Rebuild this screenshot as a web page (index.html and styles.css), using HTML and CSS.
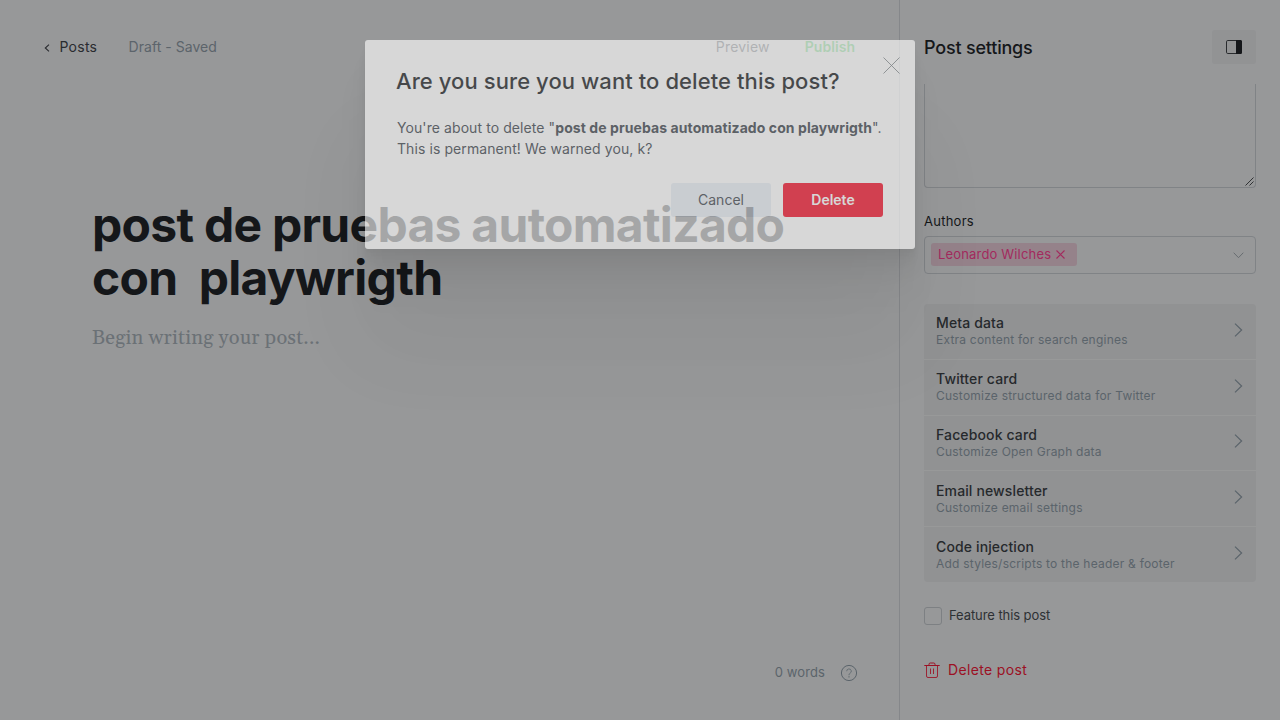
FILE: index.html
```html
<!DOCTYPE html>
<html lang="en">
<head>
<meta charset="utf-8">
<title>Post editor</title>
<link rel="stylesheet" href="styles.css">
</head>
<body>
<div class="app">
  <main class="editor">
    <header class="topbar">
      <a class="back"><svg width="6" height="8" viewBox="0 0 6 8"><path d="M5 .7 1.3 4 5 7.3" fill="none" stroke="currentColor" stroke-width="1.1"/></svg><span>Posts</span></a>
      <span class="status">Draft - Saved</span>
      <span class="preview">Preview</span>
      <span class="publish">Publish</span>
    </header>
    <section class="canvas">
      <h1 class="post-title">post de pruebas automatizado<br>con&nbsp; playwrigth</h1>
      <p class="placeholder">Begin writing your post...</p>
    </section>
    <footer class="wordcount">
      <span>0 words</span>
      <svg width="18" height="18" viewBox="0 0 18 18" fill="none" stroke="currentColor"><circle cx="9" cy="9" r="7.6"/><path d="M6.7 7.2a2.3 2.3 0 1 1 3.3 2.1c-.7.4-1 .8-1 1.6v.3" stroke-width=".8"/><circle cx="9" cy="12.9" r=".3" stroke-width=".8"/></svg>
    </footer>
  </main>
  <aside class="settings">
    <header class="settings-head">
      <h2>Post settings</h2>
      <button class="toggle"><svg width="16" height="14" viewBox="0 0 16 14"><rect x=".5" y=".5" width="15" height="13" rx="1.3" fill="none" stroke="#292b2e"/><path d="M10 0h4.500A1.500 1.500 0 0 1 16 1.500v11a1.500 1.500 0 0 1-1.500 1.500H10z" fill="#15171a"/></svg></button>
    </header>
    <div class="excerpt"><svg width="9" height="9" viewBox="0 0 9 9"><path d="M.5 8.500l8-8M4.500 8.500l4-4" stroke="#303234" fill="none"/></svg></div>
    <label class="label">Authors</label>
    <div class="select">
      <span class="token"><span>Leonardo Wilches</span><svg width="9" height="9" viewBox="0 0 9 9"><path d="M.5.5l8 8M8.500.5l-8 8" stroke="currentColor" stroke-width="1.1"/></svg></span>
      <svg class="caret" width="11" height="7" viewBox="0 0 11 7"><path d="M.7.7l4.800 5 4.800-5" fill="none" stroke="currentColor"/></svg>
    </div>
    <ul class="menu">
      <li><div><b>Meta data</b><span>Extra content for search engines</span></div><svg width="9" height="14" viewBox="0 0 9 14"><path d="M1 .6l6.600 6.400L1 13.400"/></svg></li>
      <li><div><b>Twitter card</b><span>Customize structured data for Twitter</span></div><svg width="9" height="14" viewBox="0 0 9 14"><path d="M1 .6l6.600 6.400L1 13.400"/></svg></li>
      <li><div><b>Facebook card</b><span>Customize Open Graph data</span></div><svg width="9" height="14" viewBox="0 0 9 14"><path d="M1 .6l6.600 6.400L1 13.400"/></svg></li>
      <li><div><b>Email newsletter</b><span>Customize email settings</span></div><svg width="9" height="14" viewBox="0 0 9 14"><path d="M1 .6l6.600 6.400L1 13.400"/></svg></li>
      <li><div><b>Code injection</b><span>Add styles/scripts to the header &amp; footer</span></div><svg width="9" height="14" viewBox="0 0 9 14"><path d="M1 .6l6.600 6.400L1 13.400"/></svg></li>
    </ul>
    <div class="feature"><i class="box"></i><span>Feature this post</span></div>
    <div class="remove"><svg width="16" height="16" viewBox="0 0 16 16" fill="none" stroke="currentColor"><path d="M.3 3.500h15.400M5 3.500V2.300a1.300 1.300 0 0 1 1.300-1.300h3.400A1.300 1.300 0 0 1 11 2.300v1.200"/><path d="M2.500 3.500v10.500a1.500 1.500 0 0 0 1.500 1.500h8a1.500 1.500 0 0 0 1.500-1.500V3.500M6.500 6.500v5.500M9.500 6.500v5.500" stroke-width=".85"/></svg><span>Delete post</span></div>
  </aside>
</div>
<div class="modal">
  <svg class="close" width="17" height="17" viewBox="0 0 17 17"><path d="M.5.5l16 16M16.500.5l-16 16" stroke="#6d7378" stroke-width=".8"/></svg>
  <h3>Are you sure you want to delete this post?</h3>
  <p>You're about to delete "<strong>post de pruebas automatizado con playwrigth</strong>".<br>This is permanent! We warned you, k?</p>
  <div class="actions"><button class="btn cancel">Cancel</button><button class="btn delete">Delete</button></div>
</div>
</body>
</html>
```
FILE: styles.css
```css
* { box-sizing: border-box; }
body { margin: 0; background: #979899; font-family: Inter, "Liberation Sans", sans-serif; overflow: hidden; }
h1, h2, h3, p, ul { margin: 0; padding: 0; }
svg { display: block; flex: none; }
button { border: 0; font-family: inherit; padding: 0; }
.app { display: flex; width: 1280px; height: 720px; }
.editor { flex: 1; display: flex; flex-direction: column; }
.topbar { display: flex; align-items: center; height: 34px; margin-top: 30px; padding: 0 44px 2px 44px; font-size: 14px; letter-spacing: .2px; color: #292b2f; }
.back { display: flex; align-items: center; gap: 9.5px; width: 84.5px; letter-spacing: .25px; }
.back svg { margin-top: 3px; }
.status { color: #5c646b; flex: 1; letter-spacing: .05px; }
.preview { color: #30343a; margin-right: 35px; }
.publish { color: #30803c; font-weight: 600; letter-spacing: .05px; }
.canvas { flex: 1; padding: 134px 0 0 92px; }
.post-title { font-size: 48px; line-height: 53px; font-weight: 700; letter-spacing: -.72px; color: #15171a; white-space: nowrap; }
.placeholder { margin-top: 18px; font: 20px/32px Georgia, Gelasio, "Liberation Serif", serif; letter-spacing: .2px; color: #6b7176; }
.wordcount { display: flex; justify-content: flex-end; align-items: center; gap: 15px; height: 34px; padding-right: 41px; margin-bottom: 30px; font-size: 13px; letter-spacing: .1px; color: #5b646b; }
.wordcount span, .token span, .feature span, .remove span { padding-bottom: 2px; }
.settings { width: 381px; border-left: 1px solid #85878a; padding: 30px 24px 0; }
.settings-head { display: flex; justify-content: space-between; align-items: center; height: 34px; }
.settings-head h2 { font-size: 18px; font-weight: 500; letter-spacing: -.2px; color: #15171a; }
.toggle { width: 44px; height: 34px; border-radius: 3px; background: #929394; display: flex; align-items: center; justify-content: center; }
.excerpt { height: 104px; margin-top: 20px; border: 1px solid #808386; border-top: 0; border-radius: 0 0 4px 4px; display: flex; justify-content: flex-end; align-items: flex-end; padding: 1px; }
.label { display: block; margin-top: 23px; font-size: 13px; line-height: 20px; letter-spacing: .25px; color: #15171a; }
.select { display: flex; align-items: center; justify-content: space-between; height: 38px; margin-top: 5px; padding: 0 11px 0 6px; border: 1px solid #808386; border-radius: 4px; color: #686d71; }
.token { display: flex; align-items: center; gap: 5px; height: 23px; margin-bottom: 1px; padding: 0 12px 0 7px; border-radius: 3px; background: #95828a; color: #a32a5e; font-size: 13px; letter-spacing: .17px; }
.menu { list-style: none; margin-top: 30px; border-radius: 4px; background: #919293; }
.menu li { display: flex; justify-content: space-between; align-items: center; height: 55.75px; padding: 0 13px 0 12px; border-bottom: 1px solid #989999; }
.menu li:last-child { border-bottom: 0; height: 55px; }
.menu b { display: block; font-size: 14px; line-height: 18px; font-weight: 500; letter-spacing: .13px; color: #26292c; }
.menu span { display: block; font-size: 12px; line-height: 16px; letter-spacing: .22px; color: #5b646b; }
.menu svg { fill: none; stroke: #5b646b; stroke-width: 1.2; margin-bottom: 3px; }
.feature { display: flex; align-items: center; gap: 7px; height: 18px; margin-top: 25px; font-size: 13px; letter-spacing: -.08px; color: #2e3134; }
.box { width: 18px; height: 18px; border: 1px solid #7d8083; border-radius: 3px; }
.remove { display: flex; align-items: center; gap: 8px; height: 20px; margin-top: 35px; font-size: 14px; letter-spacing: .35px; color: #9c1024; }
.modal { position: absolute; left: 365px; top: 40px; width: 550px; height: 209px; padding: 27px 32px 32px; border-radius: 3px; background: #fff; opacity: .615; box-shadow: 0 2.8px 2.2px rgba(0,0,0,.02), 0 6.7px 5.3px rgba(0,0,0,.028), 0 12.5px 10px rgba(0,0,0,.035), 0 22.3px 17.9px rgba(0,0,0,.042), 0 41.8px 33.4px rgba(0,0,0,.05), 0 100px 80px rgba(0,0,0,.07); }
.close { position: absolute; right: 15.5px; top: 16.5px; }
.modal h3 { margin-left: -1px; font-size: 22px; line-height: 28px; font-weight: 500; letter-spacing: .08px; color: #15171a; white-space: nowrap; }
.modal p { margin-top: 22px; font-size: 14px; line-height: 21px; letter-spacing: .085px; color: #394047; white-space: nowrap; }
.actions { display: flex; justify-content: flex-end; gap: 12px; margin-top: 24px; }
.btn { width: 100px; height: 34px; padding-bottom: 2px; border-radius: 3px; font-size: 14px; }
.cancel { background: #e9eef4; color: #394047; }
.delete { background: #f50b23; color: #fff; font-weight: 600; }
```
